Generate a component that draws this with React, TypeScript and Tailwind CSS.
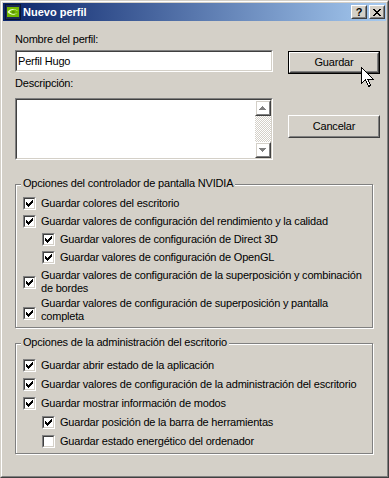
import React from 'react';

type BoxProps = { className?: string; children?: React.ReactNode };

// Bordes clásicos de Windows
const Raised = ({ className = '', children }: BoxProps) => (
  <div className={`border border-t-white border-l-white border-r-[#404040] border-b-[#404040] ${className}`}>
    <div className="w-full h-full border border-t-[#d4d0c8] border-l-[#d4d0c8] border-r-[#808080] border-b-[#808080] flex items-center justify-center">
      {children}
    </div>
  </div>
);

const Sunken = ({ className = '', children }: BoxProps) => (
  <div className={`border border-t-[#808080] border-l-[#808080] border-r-white border-b-white ${className}`}>
    <div className="w-full h-full border border-t-[#404040] border-l-[#404040] border-r-[#d4d0c8] border-b-[#d4d0c8] bg-white flex">
      {children}
    </div>
  </div>
);

const CHECK = 'M6 0h1v1h-1zM5 1h2v1h-2zM0 2h1v1h-1zM4 2h3v1h-3zM0 3h2v1h-2zM3 3h3v1h-3zM0 4h5v1h-5zM1 5h3v1h-3zM2 6h1v1h-1z';
const UP = 'M3 0h1v1h-1zM2 1h3v1h-3zM1 2h5v1h-5zM0 3h7v1h-7z';
const DOWN = 'M0 0h7v1h-7zM1 1h5v1h-5zM2 2h3v1h-3zM3 3h1v1h-1z';
const CLOSE = 'M0 0h2v1h-2zM6 0h2v1h-2zM1 1h2v1h-2zM5 1h2v1h-2zM2 2h4v1h-4zM3 3h2v1h-2zM2 4h4v1h-4zM1 5h2v1h-2zM5 5h2v1h-2zM0 6h2v1h-2zM6 6h2v1h-2z';

const CheckBox = ({ checked }: { checked: boolean }) => (
  <Sunken className="w-[13px] h-[13px] shrink-0">
    {checked && (
      <svg width="7" height="7" viewBox="0 0 7 7" shapeRendering="crispEdges" className="ml-[1px] mt-[1px]">
        <path d={CHECK} fill="#000" />
      </svg>
    )}
  </Sunken>
);

interface OptionProps {
  checked?: boolean;
  nested?: boolean;
  className?: string;
  boxClass?: string;
  children: React.ReactNode;
}

const Option = ({ checked = true, nested = false, className = '', boxClass = '', children }: OptionProps) => (
  <div className={`flex items-center gap-[5px] ${nested ? 'pl-[19px]' : ''} ${className}`}>
    <div className={boxClass}>
      <CheckBox checked={checked} />
    </div>
    <span className="leading-[13px] whitespace-nowrap">{children}</span>
  </div>
);

const ScrollArrow = ({ d }: { d: string }) => (
  <svg width="8" height="5" viewBox="0 0 8 5" shapeRendering="crispEdges">
    <path d={d} fill="#fff" transform="translate(1 1)" />
    <path d={d} fill="#808080" />
  </svg>
);

const NvidiaIcon = () => (
  <svg width="16" height="16" viewBox="0 0 16 16">
    <rect x="0.5" y="0.5" width="15" height="15" fill="#1c2a52" stroke="#000" strokeDasharray="1 1" />
    <rect x="2" y="3" width="12" height="10" fill="#76b900" />
    <path d="M2.5 8c2.5-3.5 7-4 11-0.5-3.5-2.5-7-2-9 0.5 2 2 5 2.5 8 1-3 2.5-7 2.5-10-1z" fill="#e9ffcf" />
    <circle cx="8.3" cy="8.2" r="1.4" fill="#5a9000" />
  </svg>
);

const Cursor = () => (
  <svg width="13" height="22" viewBox="0 0 13 22" shapeRendering="crispEdges" className="absolute left-[360px] top-[66px]">
    <path d="M0.5 0.5v16l4-4 3 7 2.2-1-3-6.5h5.5z" fill="#fff" stroke="#000" strokeWidth="1" />
  </svg>
);

export default function App() {
  return (
    <div className="relative w-[389px] h-[478px] bg-[#d4d0c8] border border-t-[#d4d0c8] border-l-[#d4d0c8] border-r-[#404040] border-b-[#404040] font-['Liberation_Sans',Arial,sans-serif] text-[11px] text-black select-none">
      <div className="h-full border border-t-white border-l-white border-r-[#808080] border-b-[#808080] p-px flex flex-col">
        {/* Barra de título */}
        <div className="h-[18px] shrink-0 flex items-center pl-[2px] pr-[1px] bg-[#0a246a] bg-[linear-gradient(90deg,#0a246a,#a6caf0)]">
          <NvidiaIcon />
          <span className="ml-[2px] font-bold text-white leading-[13px]">Nuevo perfil</span>
          <div className="ml-auto flex gap-[2px]">
            <Raised className="w-[16px] h-[14px] bg-[#d4d0c8]">
              <span className="font-bold text-[11px] leading-[10px]">?</span>
            </Raised>
            <Raised className="w-[16px] h-[14px] bg-[#d4d0c8]">
              <svg width="8" height="7" viewBox="0 0 8 7" shapeRendering="crispEdges">
                <path d={CLOSE} fill="#000" />
              </svg>
            </Raised>
          </div>
        </div>

        <div className="flex-1 pl-[12px] tracking-[-0.2px]">
          {/* Nombre y descripción */}
          <div className="flex gap-[15px]">
            <div className="w-[258px] flex flex-col">
              <div className="mt-[12px] leading-[13px]">Nombre del perfil:</div>
              <Sunken className="mt-[4px] h-[22px]">
                <span className="pl-[1px] self-center leading-[13px]">Perfil Hugo</span>
              </Sunken>
              <div className="mt-[5px] leading-[13px]">Descripción:</div>
              <Sunken className="mt-[8px] h-[62px]">
                <div className="flex-1" />
                <div className="w-[16px] flex flex-col">
                  <Raised className="h-[16px]">
                    <ScrollArrow d={UP} />
                  </Raised>
                  <div className="flex-1 bg-[repeating-conic-gradient(#ffffff_0_25%,#d4d0c8_0_50%)] bg-[length:2px_2px]" />
                  <Raised className="h-[16px]">
                    <ScrollArrow d={DOWN} />
                  </Raised>
                </div>
              </Sunken>
            </div>
            <div className="w-[92px] flex flex-col">
              <div className="mt-[30px] h-[23px] border border-black">
                <Raised className="h-full">
                  <span className="leading-[13px]">Guardar</span>
                </Raised>
              </div>
              <Raised className="mt-[41px] h-[23px]">
                <span className="leading-[13px]">Cancelar</span>
              </Raised>
            </div>
          </div>

          {/* Opciones del controlador */}
          <div className="relative mt-[24px] w-[358px] border border-[#808080] shadow-[inset_1px_1px_0_#fff,1px_1px_0_#fff] pt-[12px] pb-[4px] pl-[7px]">
            <span className="absolute left-[5px] -top-[8px] px-[2px] bg-[#d4d0c8] leading-[13px]">
              Opciones del controlador de pantalla NVIDIA
            </span>
            <Option>Guardar colores del escritorio</Option>
            <Option className="mt-[5px]">Guardar valores de configuración del rendimiento y la calidad</Option>
            <Option nested className="mt-[5px]">Guardar valores de configuración de Direct 3D</Option>
            <Option nested className="mt-[5px]">Guardar valores de configuración de OpenGL</Option>
            <Option className="mt-[5px]">
              Guardar valores de configuración de la superposición y combinación
              <br />
              de bordes
            </Option>
            <Option className="mt-[2px]" boxClass="mt-[6px]">
              Guardar valores de configuración de superposición y pantalla
              <br />
              completa
            </Option>
          </div>

          {/* Opciones de la administración */}
          <div className="relative mt-[15px] w-[358px] border border-[#808080] shadow-[inset_1px_1px_0_#fff,1px_1px_0_#fff] pt-[15px] pb-[5px] pl-[7px] flex flex-col gap-[6px]">
            <span className="absolute left-[5px] -top-[8px] px-[2px] bg-[#d4d0c8] leading-[13px]">
              Opciones de la administración del escritorio
            </span>
            <Option>Guardar abrir estado de la aplicación</Option>
            <Option>Guardar valores de configuración de la administración del escritorio</Option>
            <Option>Guardar mostrar información de modos</Option>
            <Option nested>Guardar posición de la barra de herramientas</Option>
            <Option nested checked={false}>Guardar estado energético del ordenador</Option>
          </div>
        </div>
      </div>
      <Cursor />
    </div>
  );
}
